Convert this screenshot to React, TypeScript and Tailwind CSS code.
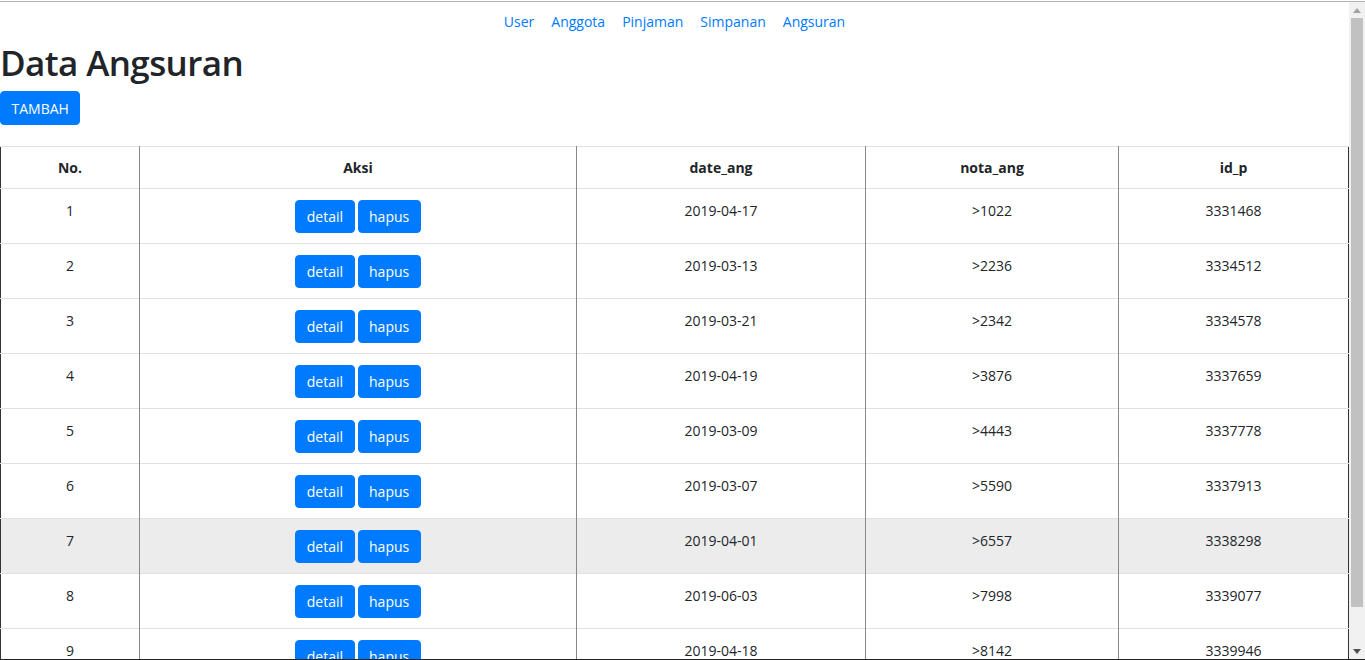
import React from "react";

interface Angsuran {
  no: number;
  date_ang: string;
  nota_ang: string;
  id_p: string;
}

const rows: Angsuran[] = [
  { no: 1, date_ang: "2019-04-17", nota_ang: ">1022", id_p: "3331468" },
  { no: 2, date_ang: "2019-03-13", nota_ang: ">2236", id_p: "3334512" },
  { no: 3, date_ang: "2019-03-21", nota_ang: ">2342", id_p: "3334578" },
  { no: 4, date_ang: "2019-04-19", nota_ang: ">3876", id_p: "3337659" },
  { no: 5, date_ang: "2019-03-09", nota_ang: ">4443", id_p: "3337778" },
  { no: 6, date_ang: "2019-03-07", nota_ang: ">5590", id_p: "3337913" },
  { no: 7, date_ang: "2019-04-01", nota_ang: ">6557", id_p: "3338298" },
  { no: 8, date_ang: "2019-06-03", nota_ang: ">7998", id_p: "3339077" },
  { no: 9, date_ang: "2019-04-18", nota_ang: ">8142", id_p: "3339946" },
];

const links = ["User", "Anggota", "Pinjaman", "Simpanan", "Angsuran"];

const btn =
  "rounded-[4px] border border-[#007bff] bg-[#007bff] px-[10.5px] py-[5px] leading-[21px] text-white";

// fake browser scrollbar, the screenshot was taken with one showing
function Scrollbar() {
  return (
    <div className="flex w-[16px] shrink-0 flex-col bg-[#f1f1f1]">
      <div className="flex h-[16px] items-center justify-center">
        <svg width="8" height="5" viewBox="0 0 8 5">
          <path d="M0 5 L4 0 L8 5 Z" fill="#a3a3a3" />
        </svg>
      </div>
      <div className="mx-[2px] h-[589px] bg-[#c1c1c1]" />
      <div className="flex-1" />
      <div className="flex h-[16px] items-center justify-center">
        <svg width="8" height="5" viewBox="0 0 8 5">
          <path d="M0 0 L4 5 L8 0 Z" fill="#505050" />
        </svg>
      </div>
    </div>
  );
}

function App() {
  return (
    <div
      className="flex h-screen flex-col overflow-hidden bg-white text-[14px] leading-[21px] text-[#212529]"
      style={{ fontFamily: '"Open Sans", "Noto Sans", sans-serif' }}
    >
      <div className="mt-px border-t border-[#b3b3b3]" />

      <div className="flex min-h-0 flex-1">
        <main className="min-w-0 flex-1 overflow-hidden">
          <nav className="mt-[2px] flex justify-center">
            {links.map((l) => (
              <a key={l} href="#" className="px-[8.5px] py-[7px] text-[#007bff]">
                {l}
              </a>
            ))}
          </nav>

          <h1 className="mt-[3px] mb-[7px] text-[35px] font-semibold leading-[42px] tracking-[-0.6px]">
            Data Angsuran
          </h1>
          <button className={btn + " h-[34px]"}>TAMBAH</button>

          <table className="mt-[21px] w-full table-fixed border-collapse border-x border-x-[#333] text-center">
            <thead>
              <tr className="border-t border-[#dee2e6]">
                <th className="w-[139px] py-[10px] font-bold">No.</th>
                <th className="w-[437px] border-l border-[#888] py-[10px] font-bold">Aksi</th>
                <th className="w-[289px] border-l border-[#888] py-[10px] font-bold">date_ang</th>
                <th className="w-[253px] border-l border-[#888] py-[10px] font-bold">nota_ang</th>
                <th className="border-l border-[#888] py-[10px] font-bold">id_p</th>
              </tr>
            </thead>
            <tbody>
              {rows.map((r) => (
                <tr
                  key={r.no}
                  className={"border-t border-[#dee2e6] align-top " + (r.no === 7 ? "bg-[#ececec]" : "")}
                >
                  <td className="pt-[11px]">{r.no}</td>
                  <td className="border-l border-[#888] py-[10.5px]">
                    <div className="flex justify-center gap-[3px]">
                      <button className={btn}>detail</button>
                      <button className={btn}>hapus</button>
                    </div>
                  </td>
                  <td className="border-l border-[#888] pt-[11px]">{r.date_ang}</td>
                  <td className="border-l border-[#888] pt-[11px]">{r.nota_ang}</td>
                  <td className="border-l border-[#888] pt-[11px]">{r.id_p}</td>
                </tr>
              ))}
            </tbody>
          </table>
        </main>
        <Scrollbar />
      </div>

      <div className="h-px shrink-0 bg-[#222]" />
    </div>
  );
}

export default App;
